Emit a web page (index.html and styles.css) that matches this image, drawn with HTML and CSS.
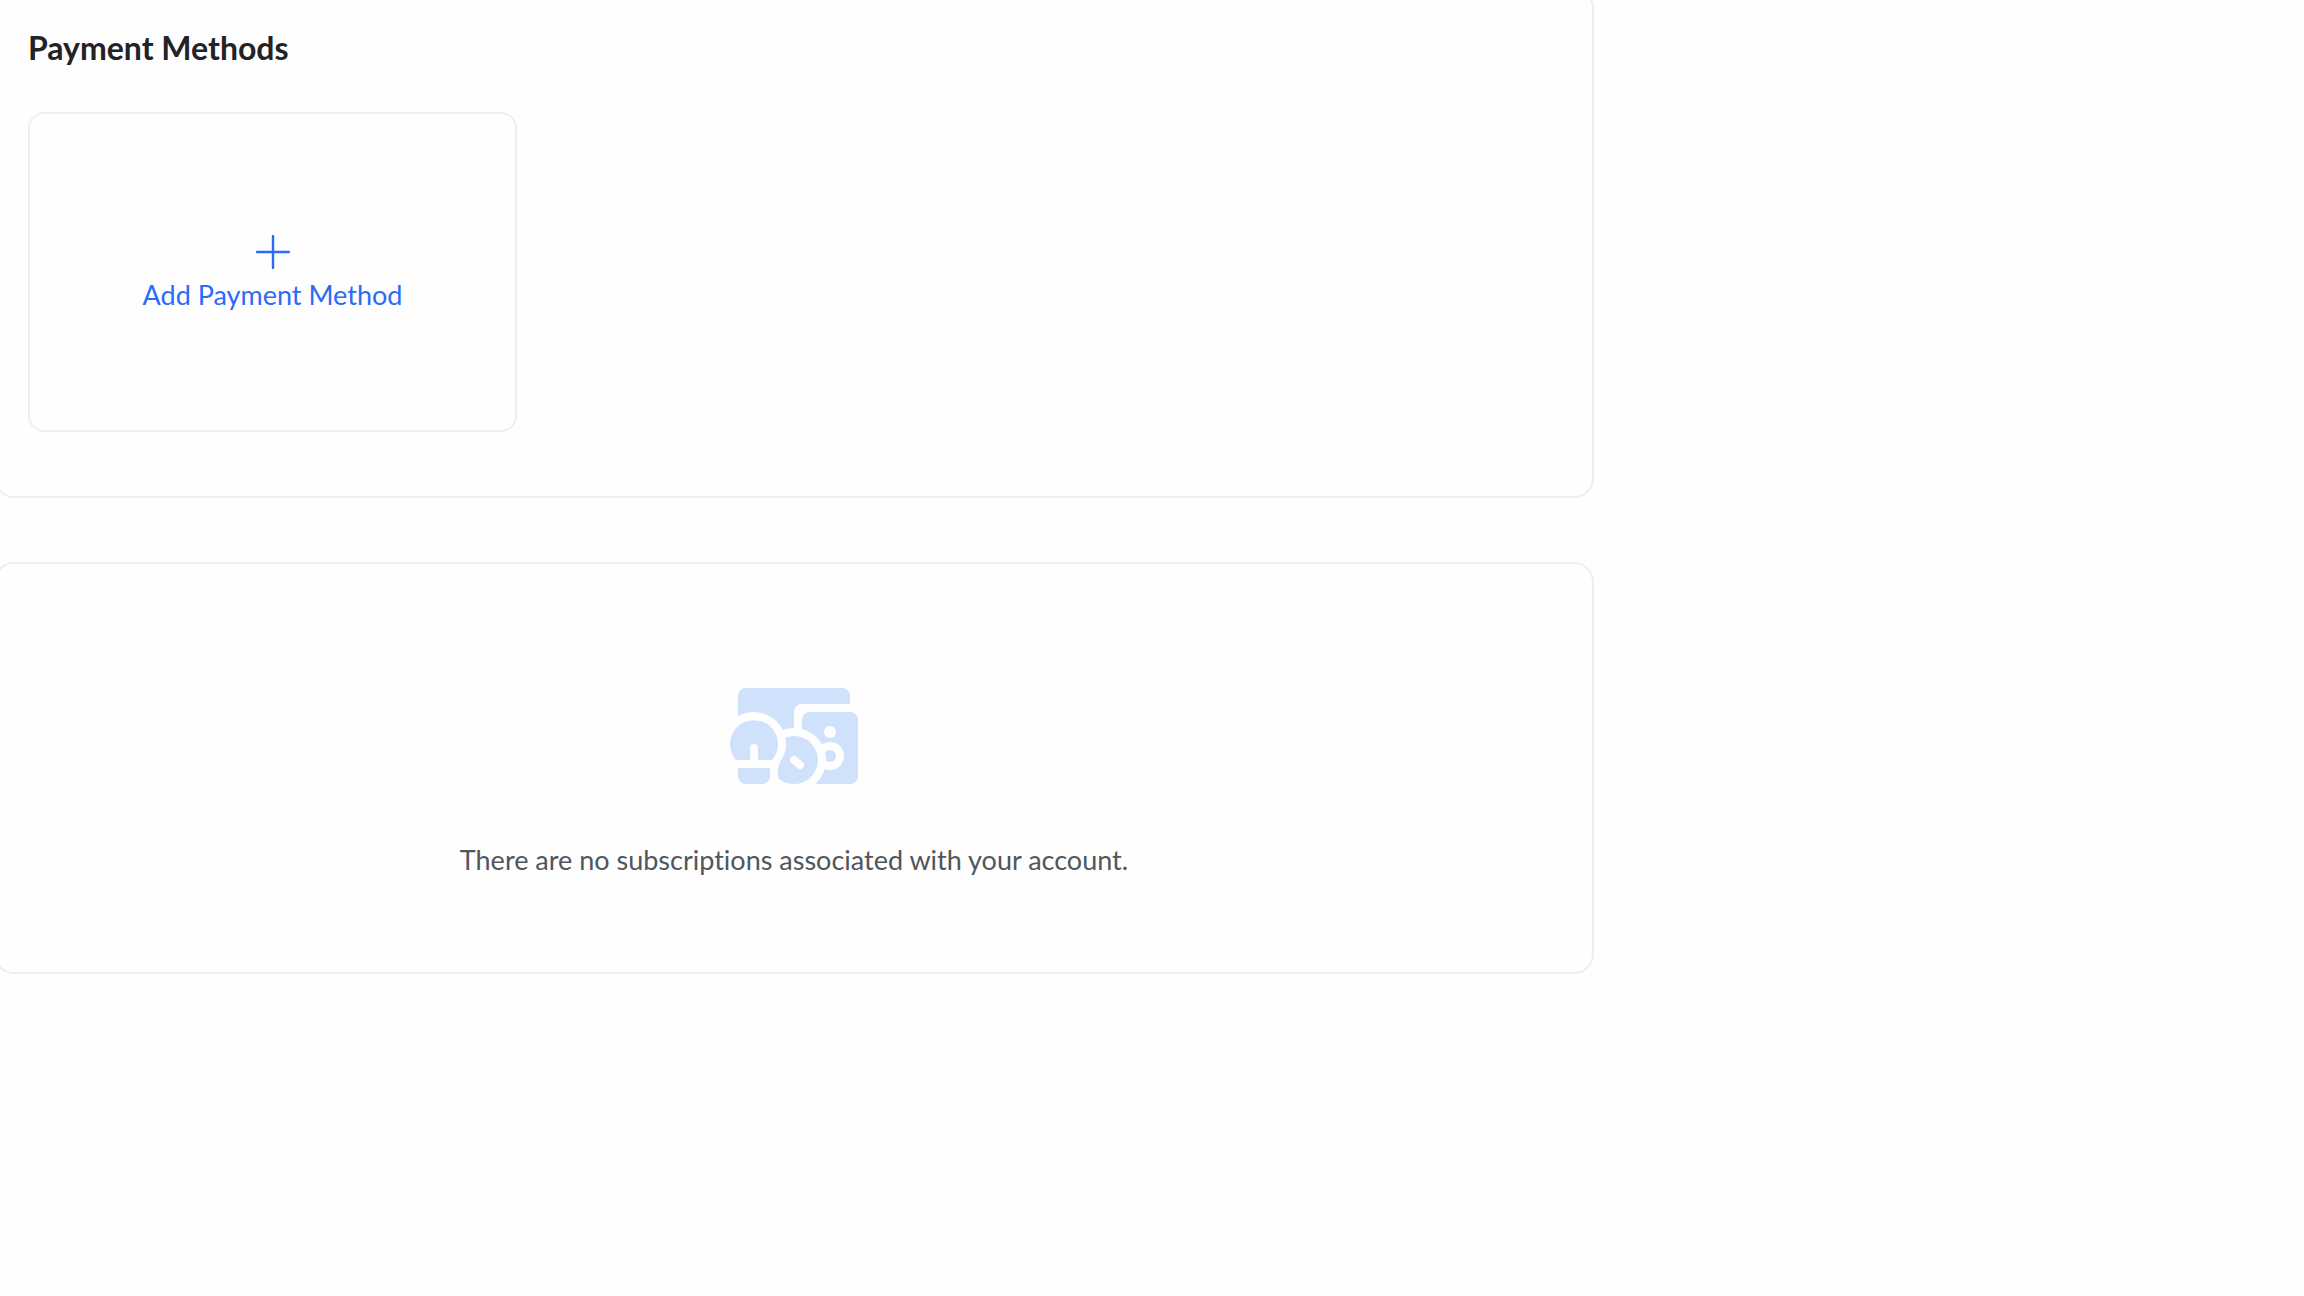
FILE: index.html
```html
<!DOCTYPE html>
<html lang="en">
<head>
<meta charset="utf-8">
<title>Payment Methods</title>
<link rel="stylesheet" href="styles.css">
</head>
<body>
<main class="content">
  <section class="panel methods">
    <h2 class="panel-title">Payment Methods</h2>
    <button type="button" class="add-method">
      <svg class="plus" viewBox="0 0 34 34" aria-hidden="true"><path d="M17 1V33M1 17H33"/></svg>
      <span>Add Payment Method</span>
    </button>
  </section>
  <section class="panel empty">
    <svg class="empty-icon" viewBox="0 0 128 96" aria-hidden="true">
      <path class="tint" d="M8 8a8 8 0 0 1 8-8H112a8 8 0 0 1 8 8V16H72a8 8 0 0 0-8 8V56H8z"/>
      <rect class="tint" x="72" y="24" width="56" height="72" rx="8"/>
      <circle class="gap" cx="100" cy="44" r="6"/>
      <circle class="gap" cx="100" cy="68" r="14"/>
      <circle class="tint" cx="100" cy="68" r="6"/>
      <circle class="gap" cx="64" cy="72" r="32"/>
      <circle class="gap" cx="24" cy="56" r="32"/>
      <path class="tint" d="M55 49.7A24 24 0 1 1 48 90V84C48 72 56 70 56 56Q56 52 55 49.7z"/>
      <path class="slot" d="M64 72L70 77"/>
      <path class="tint" d="M6 72A24 24 0 1 1 42 72H28V60a4 4 0 0 0-8 0V72z"/>
      <path class="tint" d="M8 80H40V88a8 8 0 0 1-8 8H16a8 8 0 0 1-8-8z"/>
    </svg>
    <p class="empty-text">There are no subscriptions associated with your account.</p>
  </section>
</main>
</body>
</html>
```
FILE: styles.css
```css
:root {
  --surface: #fefefe;
  --line: #eeeeee;
  --blue: #2b6bf8;
  --tint: #d0e1fc;
}

* {
  box-sizing: border-box;
}

body {
  margin: 0;
  background: var(--surface);
  font-family: Lato, "Open Sans", sans-serif;
  font-variant-ligatures: none;
  overflow-x: hidden;
}

.content {
  display: flex;
  flex-direction: column;
  gap: 64px;
  width: 100%;
  max-width: 1600px;
  margin: -12px 0 0 -6px;
}

.panel {
  border: 2px solid var(--line);
  border-radius: 20px;
}

.methods {
  padding: 38px 32px 64px;
}

.panel-title {
  margin: 0 0 44px;
  color: #212327;
  font-size: 32px;
  line-height: 40px;
  font-weight: 700;
}

.add-method {
  display: flex;
  flex-direction: column;
  align-items: center;
  justify-content: center;
  gap: 8px;
  width: 100%;
  max-width: 489px;
  min-height: 320px;
  padding: 4px 0 0;
  border: 2px solid var(--line);
  border-radius: 16px;
  background: transparent;
  color: var(--blue);
  font: 400 27px/36px Lato, "Open Sans", sans-serif;
  cursor: pointer;
}

.plus {
  width: 34px;
  height: 34px;
  fill: none;
  stroke: currentColor;
  stroke-width: 2.4;
  stroke-linecap: round;
}

.empty {
  display: flex;
  flex-direction: column;
  align-items: center;
  gap: 56px;
  padding: 124px 32px 92px;
}

.empty-icon {
  width: 128px;
  height: 96px;
}

.tint {
  fill: var(--tint);
}

.gap {
  fill: var(--surface);
}

.slot {
  fill: none;
  stroke: var(--surface);
  stroke-width: 8;
  stroke-linecap: round;
}

.empty-text {
  margin: 0;
  color: #51565d;
  font-size: 27px;
  line-height: 40px;
}
```
